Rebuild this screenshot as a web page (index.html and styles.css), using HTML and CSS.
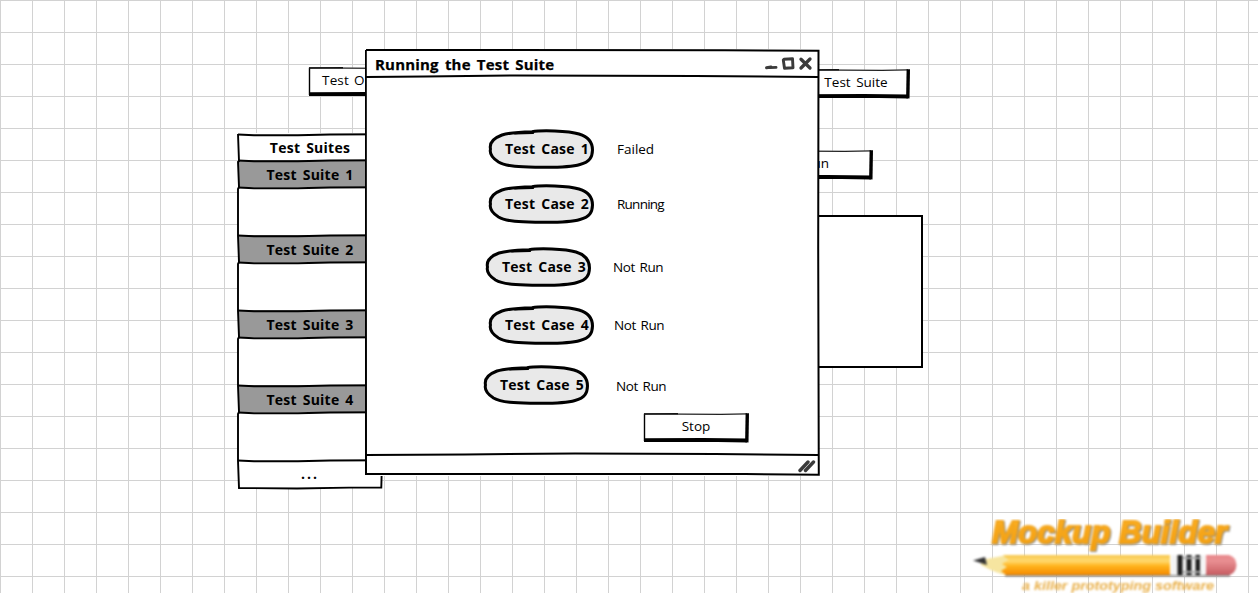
FILE: index.html
```html
<!DOCTYPE html>
<html lang="en">
<head>
<meta charset="utf-8">
<title>Running the Test Suite</title>
<link rel="stylesheet" href="styles.css">
</head>
<body>
<svg class="defs" width="0" height="0" aria-hidden="true">
  <symbol id="button" viewBox="0 0 106 30">
    <path d="M1 .8L104 .8V28H1Z" fill="#fff"/>
    <path d="M1.500 28V.8M1 1L35 .8" stroke="#000" stroke-width="1.400"/>
    <path d="M1 .9L78 1.300L104 .8" stroke="#222" stroke-width="1.200" fill="none"/>
    <path d="M1 27.200L60 26.800L104 27.500" stroke="#000" stroke-width="3.800" fill="none"/>
    <path d="M104.300 .3L103.800 29.400" stroke="#000" stroke-width="3.400"/>
  </symbol>
  <symbol id="pill" viewBox="0 0 106 40">
    <path d="M2.500 20C1 13 6 9 14 6C22 3.500 34 3 44 2.700C53 1 80 1.500 91 5C101 8 104.500 14 104.500 21C104.300 28 102 33 92 35.500C82 38.500 62 38.500 50 38.300C36 38 19 38 10.500 33C3.500 28.500 1.500 24 2.500 20Z" fill="#e9e9e9" stroke="#000" stroke-width="3" stroke-linejoin="round"/>
    <path d="M27 4.200L45 3.700" stroke="#000" stroke-width="2.400" stroke-linecap="round"/>
  </symbol>
  <symbol id="row-line" viewBox="0 0 146 4">
    <path d="M0 1.500L16 2.300L60 2.200L92 1.500L146 1.200" stroke="#000" stroke-width="2" fill="none"/>
  </symbol>
</svg>

<main class="canvas">
  <div class="btn options"><svg class="shape"><use href="#button"/></svg><span>Test Options</span></div>
  <div class="btn suite"><svg class="shape"><use href="#button"/></svg><span>Test Suite</span></div>
  <div class="btn run"><svg class="shape"><use href="#button"/></svg><span>Run</span></div>
  <div class="panel"></div>

  <section class="suites">
    <div class="row head"><svg class="line"><use href="#row-line"/></svg><span>Test Suites</span></div>
    <div class="row item"><svg class="line"><use href="#row-line"/></svg><span>Test Suite 1</span></div>
    <div class="row gap"><svg class="line"><use href="#row-line"/></svg></div>
    <div class="row item"><svg class="line"><use href="#row-line"/></svg><span>Test Suite 2</span></div>
    <div class="row gap"><svg class="line"><use href="#row-line"/></svg></div>
    <div class="row item"><svg class="line"><use href="#row-line"/></svg><span>Test Suite 3</span></div>
    <div class="row gap"><svg class="line"><use href="#row-line"/></svg></div>
    <div class="row item"><svg class="line"><use href="#row-line"/></svg><span>Test Suite 4</span></div>
    <div class="row gap"><svg class="line"><use href="#row-line"/></svg></div>
    <div class="row more"><svg class="line"><use href="#row-line"/></svg><span>...</span></div>
    <svg class="edges" viewBox="0 0 146 357">
      <g fill="none" stroke="#000" stroke-width="1.900">
        <path d="M1 1L2 28L1 29L2 54L1 56V103L2 129L1 131V178L2 204L1 206V253L2 279L1 281V328L2 355L60 355.500L112 354.600L144.300 354.500L145 328"/>
      </g>
    </svg>
  </section>

  <section class="window">
    <header class="titlebar">
      <h1>Running the Test Suite</h1>
      <svg class="controls" width="50" height="16" viewBox="0 0 50 16" fill="none" stroke="#3b3b3b" stroke-linecap="round" stroke-linejoin="round">
        <path d="M1.500 12.800L6 12M5 12.600L11 12.400" stroke-width="2.900"/>
        <path d="M19 4.300L27.500 3.700L28 12.800L19.500 13.300L18.300 5Z" stroke-width="2.900"/>
        <path d="M36 4.200L45 13M45 4L36 13" stroke-width="3.300"/>
      </svg>
    </header>
    <div class="cases">
      <div class="case c1"><div class="pill"><svg class="shape"><use href="#pill"/></svg><span>Test Case 1</span></div><span class="status">Failed</span></div>
      <div class="case c2"><div class="pill"><svg class="shape"><use href="#pill"/></svg><span>Test Case 2</span></div><span class="status running">Running</span></div>
      <div class="case c3"><div class="pill"><svg class="shape"><use href="#pill"/></svg><span>Test Case 3</span></div><span class="status wide">Not Run</span></div>
      <div class="case c4"><div class="pill"><svg class="shape"><use href="#pill"/></svg><span>Test Case 4</span></div><span class="status wide">Not Run</span></div>
      <div class="case c5"><div class="pill"><svg class="shape"><use href="#pill"/></svg><span>Test Case 5</span></div><span class="status wide">Not Run</span></div>
      <div class="btn stop"><svg class="shape"><use href="#button"/></svg><span>Stop</span></div>
    </div>
    <footer class="statusbar">
      <svg width="18" height="14" viewBox="0 0 18 14" stroke="#3b3b3b" stroke-width="3.400" stroke-linecap="round"><path d="M2 11.500L10 3M7.500 11.500L15.500 3"/></svg>
    </footer>
    <svg class="frame" viewBox="0 0 455 427" fill="none" stroke="#000" stroke-width="2">
      <path d="M1 1L360 1.200L453.500 1.800L453.200 200L453.800 425.800L380 425L1 425L.8 1"/>
      <path d="M1 28L60 27.600L150 26.500L330 27L453 28"/>
      <path d="M1 406L100 405.400L210 404.400L350 405L453 406"/>
    </svg>
  </section>

  <svg class="logo" viewBox="0 0 270 74" role="img" aria-label="Mockup Builder">
    <defs>
      <linearGradient id="wood" x1="0" y1="0" x2="0" y2="1"><stop offset="0" stop-color="#f7c84e"/><stop offset=".3" stop-color="#ffda70"/><stop offset=".55" stop-color="#ffb31d"/><stop offset="1" stop-color="#f58a00"/></linearGradient>
      <linearGradient id="rubber" x1="0" y1="0" x2="0" y2="1"><stop offset="0" stop-color="#e8888b"/><stop offset=".3" stop-color="#e98f92"/><stop offset="1" stop-color="#c75c61"/></linearGradient>
      <linearGradient id="gold" x1="0" y1="0" x2="0" y2="1"><stop offset="0" stop-color="#ffb429"/><stop offset="1" stop-color="#f29a08"/></linearGradient>
    </defs>
    <g class="soft">
      <text class="brand" x="22" y="23.500" textLength="235" lengthAdjust="spacingAndGlyphs">Mockup Builder</text>
      <path d="M35 56.500H260" stroke="#888" stroke-width="2" fill="none"/>
      <path d="M11 41L37 36V56Q27 55 11 46Z" fill="#f6e5a0"/>
      <path d="M3 41.500L15 38L17 46Z" fill="#333"/>
      <path d="M33 36H200V56H36L31 52L37 48L32 45L38 41Z" fill="url(#wood)"/>
      <path d="M201 36H235V56H201Z" fill="#f4f4f4"/>
      <path d="M207.500 36H212.500V56H207.500ZM216.500 36H221.500V56H216.500ZM225.500 36H230V56H225.500Z" fill="#1c1c1c"/>
      <path d="M213 38H231V40H213ZM213 52H231V54H213Z" fill="#aaa"/>
      <path d="M236 36H259Q266 38 266.500 46Q266 54 259 56H236Z" fill="url(#rubber)"/>
      <text class="tagline" x="52" y="70.500" textLength="192" lengthAdjust="spacingAndGlyphs">a killer prototyping software</text>
    </g>
  </svg>
</main>
</body>
</html>
```
FILE: styles.css
```css
body {
  margin: 0;
  color: #000;
  font: 13.5px/20px "Open Sans", sans-serif;
}

.defs { position: absolute; }

.canvas {
  position: relative;
  width: 1258px;
  height: 593px;
  overflow: hidden;
  background-color: #fff;
  background-image:
    linear-gradient(#d2d2d2 1px, transparent 1px),
    linear-gradient(90deg, #d2d2d2 1px, transparent 1px);
  background-size: 32px 32px;
}

.shape {
  position: absolute;
  inset: 0;
  width: 100%;
  height: 100%;
}

.btn {
  position: relative;
  display: flex;
  align-items: center;
  justify-content: center;
  box-sizing: border-box;
  width: 106px;
  height: 30px;
  padding-bottom: 4px;
  white-space: nowrap;
}

.btn span, .pill span { position: relative; }

.options { position: absolute; left: 308px; top: 67px; }
.options span { letter-spacing: .15px; word-spacing: 1.5px; margin-left: 5px; }
.suite { position: absolute; left: 804px; top: 69px; padding-right: 2px; }
.suite span { word-spacing: 2px; }
.run { position: absolute; left: 767px; top: 150px; padding-right: 7px; }

.panel {
  position: absolute;
  left: 700px;
  top: 215px;
  box-sizing: border-box;
  width: 223px;
  height: 153px;
  border: 2px solid #000;
  background: #fff;
}

.suites {
  position: absolute;
  left: 237px;
  top: 133px;
  width: 146px;
  height: 357px;
}

.row {
  position: relative;
  display: flex;
  align-items: center;
  justify-content: center;
  box-sizing: border-box;
  width: 144px;
  height: 27px;
  margin-left: 1px;
  background: #fff;
  font-weight: 700;
  font-size: 14px;
}
.row span { padding-top: 3px; letter-spacing: .25px; word-spacing: 2px; }
.item { background: #999; }
.gap { height: 48px; }
.more { height: 28px; }
.more span { padding-top: 0; letter-spacing: 2px; }

.line {
  position: absolute;
  left: 0;
  top: -1px;
  width: 146px;
  height: 4px;
}
.head .line { top: 0; }

.edges {
  position: absolute;
  left: 0;
  top: 0;
  width: 146px;
  height: 357px;
}

.window {
  position: absolute;
  left: 365px;
  top: 49px;
  display: flex;
  flex-direction: column;
  width: 455px;
  height: 427px;
}

.titlebar, .cases, .statusbar { margin: 0 1px; background: #fff; }

.titlebar {
  display: flex;
  align-items: center;
  justify-content: space-between;
  height: 28px;
  padding: 0 4px 0 9px;
}
.titlebar h1 {
  margin: 2px 0 0;
  font-size: 15px;
  font-weight: 700;
  letter-spacing: .2px;
  word-spacing: 2px;
  -webkit-text-stroke: .25px #000;
}

.cases { flex: 1; padding-top: 3px; }

.case { display: flex; align-items: center; height: 40px; }
.c1 { margin: 49px 0 0 122px; }
.c2 { margin: 15px 0 0 122px; }
.c3 { margin: 23px 0 0 119px; }
.c4 { margin: 18px 0 0 122px; }
.c5 { margin: 20px 0 0 117px; }

.pill {
  position: relative;
  display: flex;
  align-items: center;
  justify-content: flex-end;
  box-sizing: border-box;
  width: 106px;
  height: 40px;
  padding-right: 5px;
  font-size: 14px;
  font-weight: 700;
  letter-spacing: .25px;
  word-spacing: 2px;
}

.status { padding-left: 23px; }
.running { letter-spacing: -.75px; }
.wide { letter-spacing: -.4px; word-spacing: 1.5px; }
.c3 .status { padding-left: 22px; }
.c4 .status { padding: 0 0 1px 20px; }
.c5 .status { padding: 2px 0 0 27px; }

.stop { margin: 8px 0 0 277px; }

.statusbar {
  display: flex;
  align-items: center;
  justify-content: flex-end;
  height: 21px;
  padding-right: 3px;
}

.frame {
  position: absolute;
  inset: 0;
  width: 455px;
  height: 427px;
  pointer-events: none;
}

.logo {
  position: absolute;
  left: 970px;
  top: 519px;
  width: 270px;
  height: 74px;
}
.soft { filter: blur(.9px); }
.brand {
  font: italic 700 31px "Liberation Sans", sans-serif;
  fill: url(#gold);
  stroke: #f3a51c;
  stroke-width: 2px;
  filter: drop-shadow(1px 1px .5px #888);
}
.tagline {
  font: italic 700 13.5px "Liberation Sans", sans-serif;
  fill: #e9b04a;
}
```
